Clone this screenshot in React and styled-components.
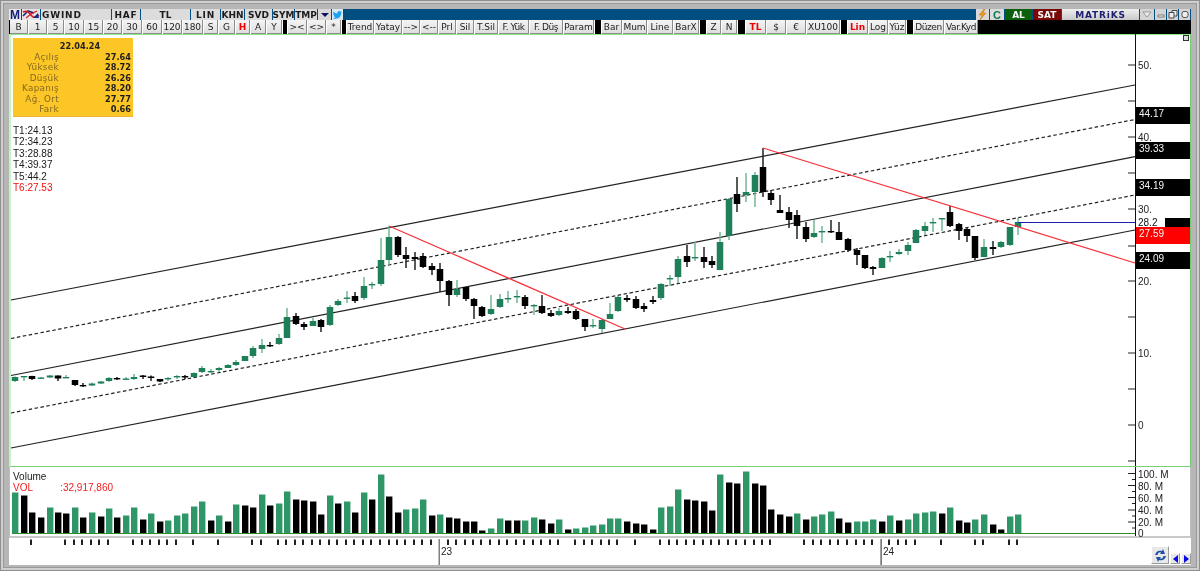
import React from 'react'
import styled, { createGlobalStyle } from 'styled-components'

const GlobalStyle = createGlobalStyle`
  html, body { margin: 0; padding: 0; background: #b5b5b5; }
  #root { width: 1200px; height: 571px; overflow: hidden; }
`;

const GREEN = '#2f9667';
const UI_FONT = '"DejaVu Sans", Verdana, sans-serif';
const CHART_FONT = '"Liberation Sans", Arial, sans-serif';

const Frame = styled.div`
  box-sizing: border-box;
  display: flex;
  flex-direction: column;
  width: 1200px;
  height: 571px;
  padding: 9px 9px 6px 9px;
  background: #b6b6b6;
  box-shadow: inset 0 0 0 1px #8e8e8e, inset 0 0 0 3px #cfcfcf, inset 0 0 0 4px #9a9a9a;
  filter: blur(0.3px);
`;

const TitleBar = styled.div`
  display: flex;
  height: 11px;
  background: #004f80;
  font: bold 9px ${UI_FONT};
  color: #1c1c1c;
`;

const TitleCell = styled.div`
  box-sizing: border-box;
  display: flex;
  align-items: center;
  justify-content: ${p => (p.$left ? 'flex-start' : 'center')};
  width: ${p => p.$w}px;
  margin-right: 1px;
  padding-left: ${p => (p.$left ? '1px' : 0)};
  background: ${p => p.$bg || '#dcdcdc'};
  color: ${p => p.$color || 'inherit'};
  letter-spacing: ${p => (p.$wide ? '0.8px' : '0')};
  white-space: nowrap;
  overflow: hidden;
`;

const BrandCell = styled(TitleCell)`
  font: bold 12px ${CHART_FONT};
`;

const ReloadCell = styled(TitleCell)`
  font: 900 11px ${CHART_FONT};
`;

const Spacer = styled.div`
  flex: 1;
`;

const ToolRow = styled.div`
  display: flex;
  height: 14px;
  padding-left: 1px;
  background: #000;
  font: 9px ${UI_FONT};
  color: #222;
`;

const LeftWhite = styled.div`
  display: flex;
  height: 14px;
  background: #fff;
  gap: 1px;
`;

const ToolButton = styled.div`
  box-sizing: border-box;
  display: flex;
  align-items: center;
  justify-content: center;
  width: ${p => p.$w}px;
  background: linear-gradient(#f4f4f4, #dedede);
  border-right: 1px solid #8c8c8c;
  border-bottom: 1px solid #8c8c8c;
  color: ${p => (p.$red ? '#f00000' : '#222')};
  font-weight: ${p => (p.$red ? 700 : 400)};
  letter-spacing: ${p => (p.$w < 34 && p.$tight ? '-0.45px' : '0')};
  white-space: nowrap;
  overflow: hidden;
`;

const ToolGap = styled.div`
  width: ${p => p.$w}px;
  background: #000;
`;

const PricePanel = styled.div`
  position: relative;
  box-sizing: border-box;
  height: 433px;
  background: #fff;
  border-top: 1px solid #8fe98f;
  border-bottom: 1px solid #74d374;
  border-left: 2px solid #c4f5c4;
  border-right: 1px solid #74c874;
`;

const ChartSvg = styled.svg`
  position: absolute;
  left: ${p => p.$inset || 0}px;
  top: ${p => (p.$inset ? -1 : 0)}px;
  display: block;
`;

const InfoBox = styled.div`
  position: absolute;
  left: 2px;
  top: 3px;
  box-sizing: border-box;
  width: 120px;
  height: 78px;
  padding: 3px 2px 0 2px;
  background: #fcc626;
  font: 8.8px/10.55px ${UI_FONT};
  box-shadow: 0 1px 0 #f2b33d;
`;

const InfoDate = styled.div`
  padding-left: 14px;
  text-align: center;
  font-weight: 700;
  font-size: 8.2px;
  color: #222;
`;

const InfoRow = styled.div`
  display: flex;
  justify-content: space-between;
`;

const InfoLabel = styled.span`
  width: 44px;
  text-align: right;
  color: #86691f;
  letter-spacing: 0.35px;
`;

const InfoValue = styled.span`
  font-weight: 700;
  font-size: 8.2px;
  color: #1c1c1c;
`;

const LevelList = styled.div`
  position: absolute;
  left: 2px;
  top: 90px;
  font: 10px/11.4px ${CHART_FONT};
  color: #1a1a1a;
`;

const Level = styled.div`
  color: ${p => (p.$red ? '#f01010' : 'inherit')};
`;

const AxisLabel = styled.span`
  position: absolute;
  left: ${p => p.$x}px;
  top: ${p => p.$y}px;
  font: 10px/12px ${CHART_FONT};
  color: #222;
  white-space: nowrap;
`;

const Flag = styled.div`
  position: absolute;
  left: 1125px;
  top: ${p => p.$y}px;
  box-sizing: border-box;
  width: 54px;
  height: 17px;
  padding-left: 3px;
  background: ${p => p.$bg || '#000'};
  font: 10px/13px ${CHART_FONT};
  color: #f4f4f4;
`;

const SplitFlag = styled.div`
  position: absolute;
  left: 1125px;
  top: ${p => p.$y}px;
  display: flex;
  width: 54px;
  height: 9px;
  background: #fff;
  font: 10px/10px ${CHART_FONT};
  color: #111;
`;

const SplitText = styled.span`
  width: 29px;
  padding-left: 2px;
  box-sizing: border-box;
`;

const SplitBlack = styled.span`
  flex: 1;
  background: #000;
`;

const Corner = styled.div`
  position: absolute;
  right: 1px;
  top: 0;
  box-sizing: border-box;
  width: 6px;
  height: 6px;
  background: #ddd;
  border: 1px solid #333;
`;

const VolumePanel = styled.div`
  position: relative;
  box-sizing: border-box;
  height: 71px;
  background: #fff;
  border-left: 1px solid #bdbdbd;
  border-right: 1px solid #bdbdbd;
  border-bottom: 2px solid #c9c9c9;
`;

const VolumeTitle = styled.div`
  position: absolute;
  left: 3px;
  top: 4px;
  font: 10px/11px ${CHART_FONT};
  color: #222;
`;

const VolumeValue = styled.div`
  display: flex;
  width: 100px;
  justify-content: space-between;
  color: #f02020;
`;

const TimeStrip = styled.div`
  position: relative;
  flex: 1;
  background: #fff;
`;

const Pager = styled.div`
  position: absolute;
  right: 0;
  bottom: 1px;
  display: flex;
  align-items: flex-end;
  gap: 1px;
`;

const PagerButton = styled.div`
  box-sizing: border-box;
  display: flex;
  align-items: center;
  justify-content: center;
  width: ${p => p.$w}px;
  height: ${p => p.$h}px;
  background: #e8e8e8;
  border-top: 1px solid #fff;
  border-left: 1px solid #fff;
  border-right: 1px solid #9a9a9a;
  border-bottom: 1px solid #9a9a9a;
`;

const topLeft = [
  { w: 70, t: 'GWIND', left: true, wide: true },
  { w: 28, t: 'HAF', wide: true },
  { w: 49, t: 'TL' },
  { w: 29, t: 'LIN', wide: true },
  { w: 23, t: 'KHN' },
  { w: 27, t: 'SVD' },
  { w: 21, t: 'SYM' },
  { w: 22, t: 'TMP' },
];

const buttons = [
  [18, 'B'], [18, '1'], [16, '5'], [19, '10'], [18, '15'], [18, '20'], [19, '30'], [19, '60'],
  [19, '120'], [20, '180'], [14, 'S'], [16, 'G'], [14, 'H', 'red'], [15, 'A'], [15, 'Y'], ['g', 4],
  [19, '><'], [18, '<>'], [14, '*'], ['g', 4], [27, 'Trend'], [27, 'Yatay'], [17, '-->'], [17, '<--'],
  [17, 'Prl'], [17, 'Sil'], [23, 'T.Sil'], [30, 'F. Yük', 'tight'], [33, 'F. Düş', 'tight'], [30, 'Param'], ['g', 6],
  [20, 'Bar'], [24, 'Mum'], [25, 'Line'], [25, 'BarX'], ['g', 6], [14, 'Z'], [15, 'N'], ['g', 7],
  [20, 'TL', 'red'], [19, '$'], [19, '€'], [33, 'XU100'], ['g', 6], [20, 'Lin', 'red'], [19, 'Log'],
  [17, 'Yüz'], ['g', 6], [30, 'Düzen', 'tight'], [33, 'Var.Kyd', 'tight'],
];

const info = [
  ['Açılış', '27.64'], ['Yüksek', '28.72'], ['Düşük', '26.26'],
  ['Kapanış', '28.20'], ['Ağ. Ort', '27.77'], ['Fark', '0.66'],
];

const levels = ['T1:24.13', 'T2:34.23', 'T3:28.88', 'T4:39.37', 'T5:44.2'];

// x, colour, high, body top, body bottom, low (page pixels)
const candles = [
  [15,'g',376.5,377,381,382],[24,'g',376,376,377,381],[32,'k',375.7,376,379,380],[41,'g',377,377.5,378.5,379],
  [50,'g',375,375.5,377.5,378],[58,'k',375.5,375.5,378.5,381],[66,'g',375,377,378,378],[75,'k',380,380,385,386],
  [83,'k',383,385,386,387],[92,'g',382.5,383.5,385.5,386],[101,'g',381,381.5,383.5,384],[109,'g',377,378,381,382],
  [117,'k',377,378,379,380],[126,'g',377,378.5,379.5,380],[134,'g',374,377,379,380],[143,'k',375,375.5,377,379],
  [151,'k',375.5,376.5,378,381],[160,'k',379,379,381.5,382],[168,'g',377,378,379,381],[177,'g',375,376,377,379],
  [185,'k',375,376,377.5,379],[194,'g',372.5,373,377,377],[202,'g',366,368,372,373],[211,'g',369,371,372,373],
  [219,'g',367,368,370,372],[228,'g',364,365,368,368],[236,'g',360,362,365,366],[245,'g',356,356,361,361],
  [253,'g',346,348,356,358],[262,'g',339,345,349,353],[270,'k',342,345,346,347],[279,'g',334,338,344,345],
  [287,'g',308,317,338,338],[296,'k',313,316,324,325],[304,'k',322,324,327,330],[313,'g',318,321,326,326],
  [321,'k',319,320,327,332],[330,'g',305,307,325,326],[338,'g',299,301,305,306],[347,'g',291,297.5,298.5,303],
  [355,'k',292,296,301,303],[364,'g',277,286,298,300],[372,'g',282,284,285,289],[381,'g',238,260,284,286],
  [389,'g',226,237,260,265],[398,'k',236,237,255,257],[406,'k',247,255,259,268],[415,'k',252,257,259,270],
  [423,'k',253,256,267,268],[432,'k',263,266,270,275],[440,'k',263,269,281,292],[449,'k',280,281,295,306],
  [457,'g',280,289,295,297],[466,'k',287,287,299,301],[474,'k',298,299,306,319],[482,'k',306,307,316,317],
  [491,'g',295,309,314,315],[500,'g',294,299,307,308],[508,'g',291,298,299,303],[517,'g',290,296,297,303],
  [525,'k',295,297,306,309],[534,'g',304,305,306,315],[542,'k',295,306,313,314],[551,'k',310,313,316,317],
  [559,'g',308,311,315,316],[568,'k',307,311,313,314],[576,'k',309,311,319,320],[585,'k',319,319,327,331],
  [593,'g',319,325,326,328],[602,'g',319,320,329,333],[610,'g',303,314,319,319],[618,'g',296,297,311,312],
  [627,'k',295,298,300,302],[636,'k',296,299,308,309],[644,'k',303,306,309,312],[653,'k',296,300,302,304],
  [661,'g',283,284,298,300],[670,'g',275,278,279,286],[678,'g',256,259,277,283],[687,'k',245,256,262,267],
  [695,'g',242,257,258,261],[704,'k',247,257,262,268],[712,'k',256,261,265,268],[720,'g',232,242,270,270],
  [729,'g',198,199,236,240],[737,'k',177,194,204,212],[746,'g',173,192,195,202],[755,'g',172,175,192,207],
  [763,'k',148,167,192,197],[771,'k',190,193,200,205],[780,'k',195,210,213,213],[789,'k',207,212,220,228],
  [797,'k',210,215,226,239],[806,'k',222,227,239,242],[814,'g',220,233,237,238],[822,'g',226,231,232,243],
  [831,'k',220,231,232,233],[839,'k',222,232,240,240],[848,'k',238,239,250,252],[857,'k',248,250,255,265],
  [865,'k',255,255,268,269],[873,'k',266,267,269,275],[882,'g',257,258,268,268],[890,'g',251,256,257,262],
  [899,'g',249,252,254,255],[908,'g',242,245,251,255],[916,'g',229,230,243,243],[925,'g',222,226,231,235],
  [933,'g',218,222,223,232],[942,'g',218,218,219,231],[950,'k',206,212,226,227],[959,'k',223,224,231,240],
  [967,'k',228,229,236,242],[975,'k',236,236,258,260],[984,'g',239,247,257,257],[993,'k',241,247,249,255],
  [1001,'g',241,242,247,248],[1010,'g',227,227,245,246],[1018,'g',218,222,227,235],
];

const volumes = [
  [15,41,'g'],[24,38,'k'],[32,21,'k'],[41,16,'k'],[50,26,'g'],[58,21,'k'],[66,20,'k'],[75,26,'g'],[83,16,'k'],[92,21,'g'],
  [101,17,'k'],[109,25,'g'],[117,16,'k'],[126,18,'g'],[134,26,'g'],[143,14,'k'],[151,20,'g'],[160,12,'k'],[168,13,'g'],[177,18,'g'],
  [185,20,'g'],[194,27,'g'],[202,32,'g'],[211,13,'k'],[219,18,'g'],[228,12,'k'],[236,29,'g'],[245,28,'k'],[253,26,'k'],[262,39,'g'],
  [270,28,'k'],[279,30,'g'],[287,42,'g'],[296,34,'k'],[304,33,'k'],[313,32,'k'],[321,19,'k'],[330,38,'g'],[338,30,'k'],[347,32,'g'],
  [355,21,'k'],[364,41,'g'],[372,34,'k'],[381,59,'g'],[389,37,'k'],[398,21,'k'],[406,24,'g'],[415,25,'g'],[423,34,'g'],[432,18,'k'],
  [440,19,'g'],[449,16,'k'],[457,15,'k'],[466,12,'k'],[474,12,'k'],[482,3,'k'],[491,5,'g'],[500,15,'g'],[508,13,'k'],[517,13,'k'],
  [525,13,'g'],[534,16,'g'],[542,14,'k'],[551,10,'k'],[559,14,'g'],[568,4,'k'],[576,5,'g'],[585,6,'g'],[593,8,'g'],[602,9,'g'],
  [610,15,'g'],[618,15,'g'],[627,12,'k'],[636,10,'k'],[644,9,'k'],[653,4,'k'],[661,26,'g'],[670,27,'g'],[678,44,'g'],[687,34,'k'],
  [695,33,'k'],[704,32,'k'],[712,23,'k'],[720,59,'g'],[729,51,'k'],[737,50,'k'],[746,62,'g'],[755,50,'k'],[763,48,'k'],[771,24,'k'],
  [780,19,'k'],[789,17,'k'],[797,20,'g'],[806,14,'k'],[814,17,'g'],[822,19,'g'],[831,22,'g'],[839,15,'k'],[848,11,'k'],[857,12,'g'],
  [865,12,'g'],[873,14,'g'],[882,12,'k'],[890,18,'g'],[899,13,'k'],[908,14,'g'],[916,20,'g'],[925,21,'g'],[933,22,'g'],[942,20,'k'],
  [950,26,'g'],[959,13,'k'],[967,11,'k'],[975,14,'g'],[984,19,'g'],[993,9,'k'],[1001,4,'k'],[1010,17,'g'],[1018,19,'g'],
];

const timeTicks = [
  32,66,75,83,92,100,109,134,143,151,160,168,177,194,219,253,262,279,287,296,304,313,321,330,338,347,355,364,372,381,390,398,
  406,415,423,432,449,457,466,474,482,491,500,508,517,525,534,542,551,559,576,585,593,602,610,618,636,661,670,678,687,695,704,712,720,729,737,746,755,763,771,
  805,814,822,831,839,848,857,865,873,890,899,907,916,942,976,984,1010,1018,
];

const channels = [
  { y1: 300, y2: 85, dash: false },
  { y1: 338.5, y2: 119.5, dash: true },
  { y1: 375.5, y2: 156.7, dash: false },
  { y1: 413, y2: 195, dash: true },
  { y1: 448, y2: 230, dash: false },
];

const priceTicks = [65, 101, 137, 173, 209, 246, 281, 317, 353, 389, 425, 461];
const priceLabels = [['50.', 65], ['40.', 137], ['30.', 209], ['20.', 281], ['10.', 353], ['0', 425]];
const volLabels = [['100. M', 474], ['80. M', 486], ['60. M', 498], ['40. M', 510], ['20. M', 522], ['0', 533]];

function Candle({ x, color, high, top, bottom, low }) {
  const dark = color === 'k';
  return (
    <g>
      <line x1={x} x2={x} y1={high} y2={low} stroke={dark ? '#222' : '#6fb893'} strokeWidth="1.5" />
      <rect
        x={x - 3.25}
        y={top}
        width="6.5"
        height={Math.max(bottom - top, 1.4)}
        fill={dark ? '#000' : '#1f7f58'}
      />
    </g>
  );
}

function PriceChart() {
  return (
    <ChartSvg $inset={-2} width="1180" height="432" viewBox="9 34 1180 432">
      {channels.map((c, i) => (
        <line
          key={i}
          x1="11"
          x2="1135"
          y1={c.y1}
          y2={c.y2}
          stroke="#222"
          strokeWidth="1.2"
          strokeDasharray={c.dash ? '3.5 2.5' : undefined}
        />
      ))}
      {candles.map(([x, color, high, top, bottom, low]) => (
        <Candle key={x} x={x} color={color} high={high} top={top} bottom={bottom} low={low} />
      ))}
      <line x1="389" y1="226" x2="625" y2="329" stroke="#f8303a" strokeWidth="1.2" />
      <line x1="763" y1="148" x2="1135" y2="263" stroke="#f8303a" strokeWidth="1.2" />
      <line x1="1018" y1="222.5" x2="1135" y2="222.5" stroke="#2020b0" strokeWidth="1.2" />
      <line x1="1135.5" y1="34" x2="1135.5" y2="466" stroke="#111" strokeWidth="1" />
      {priceTicks.map(y => (
        <line key={y} x1="1128" x2="1135" y1={y} y2={y} stroke="#222" strokeWidth="1" />
      ))}
    </ChartSvg>
  );
}

function VolumeChart() {
  const base = 533.5;
  const major = [473.5, 485.5, 497.5, 510, 522];
  const minor = [479.5, 491.5, 503.5, 516, 528];
  return (
    <ChartSvg width="1180" height="69" viewBox="10 467 1180 69">
      {volumes.map(([x, h, color]) => (
        <rect
          key={x}
          x={x - 3}
          y={base - h}
          width="6.4"
          height={h}
          fill={color === 'k' ? '#000' : GREEN}
        />
      ))}
      <line x1="12" x2="1135" y1={base} y2={base} stroke="#2f8f2f" strokeWidth="1" />
      <line x1="1135.5" y1="467" x2="1135.5" y2="536" stroke="#111" strokeWidth="1" />
      {major.map(y => (
        <line key={y} x1="1128" x2="1135" y1={y} y2={y} stroke="#222" strokeWidth="1" />
      ))}
      {minor.map(y => (
        <line key={y} x1="1132" x2="1135" y1={y} y2={y} stroke="#222" strokeWidth="1" />
      ))}
    </ChartSvg>
  );
}

function TimeAxis() {
  return (
    <ChartSvg width="1180" height="27" viewBox="10 538 1180 27">
      {timeTicks.map(x => (
        <rect key={x} x={x - 1} y="539.5" width="2" height="5.5" fill="#222" />
      ))}
      <rect x="439.5" y="539" width="1.5" height="26" fill="#808080" />
      <rect x="881.5" y="539" width="1.2" height="26" fill="#444" />
    </ChartSvg>
  );
}

function Logo() {
  return (
    <svg width="18" height="11" viewBox="0 0 18 11">
      <path d="M1 7 L6 2 L12 4" fill="none" stroke="#1c2a78" strokeWidth="1.6" />
      <path d="M1 3 C5 1 7 3 9 6 C11 9 14 9 17 6" fill="none" stroke="#d81f26" strokeWidth="1.6" />
      <path d="M4 9 L9 5 L15 2" fill="none" stroke="#d81f26" strokeWidth="1.2" />
      <path d="M11 9 L16 4 L17 9 Z" fill="#1c2a78" />
    </svg>
  );
}

function Twitter() {
  return (
    <svg width="11" height="10" viewBox="0 0 24 24">
      <path
        fill="#1da1f2"
        d="M23 4.9c-.8.4-1.7.6-2.6.8.9-.6 1.6-1.4 2-2.5-.9.5-1.9.9-2.9 1.1a4.6 4.6 0 0 0-7.9 4.2A13 13 0 0 1 2.2 3.7a4.6 4.6 0 0 0 1.4 6.1c-.7 0-1.4-.2-2.1-.6 0 2.2 1.6 4.100 3.7 4.600-.7.200-1.400.200-2.100.100.600 1.800 2.300 3.100 4.300 3.200A9.300 9.300 0 0 1 .6 19 13 13 0 0 0 20.600 7.500c.9-.6 1.700-1.500 2.400-2.600z"
      />
    </svg>
  );
}

function Bolt() {
  return (
    <svg width="9" height="11" viewBox="0 0 9 11">
      <path d="M6 0 L1 6 L4 6 L2 11 L8 4 L5 4 L7 0 Z" fill="#ef9a1a" stroke="#a8640a" strokeWidth=".4" />
    </svg>
  );
}

function Refresh() {
  return (
    <svg width="13" height="13" viewBox="0 0 13 13">
      <path d="M1 6 C2 2 5 1 8 2 L9 0 L11 5 L6 5 L7 3.5 C5 3 4 4 3.5 6 Z" fill="#1f4fa8" />
      <path d="M12 7 C11 11 8 12 5 11 L4 13 L2 8 L7 8 L6 9.5 C8 10 9 9 9.5 7 Z" fill="#1f4fa8" />
    </svg>
  );
}

function Triangle({ dir }) {
  const d = { down: 'M0 0 L8 0 L4 4 Z', left: 'M5 0 L5 8 L0 4 Z', right: 'M0 0 L0 8 L5 4 Z' }[dir];
  const size = dir === 'down' ? [8, 4] : [5, 8];
  return (
    <svg width={size[0]} height={size[1]} viewBox={`0 0 ${size[0]} ${size[1]}`}>
      <path d={d} fill={dir === 'down' ? '#101060' : '#0808e0'} />
    </svg>
  );
}

function WinButton({ kind }) {
  return (
    <TitleCell $w={kind === 'drop' ? 14 : 11} $bg="#d4d4d4">
      <svg width="10" height="9" viewBox="0 0 10 9">
        {kind === 'drop' && <path d="M1 2 L9 2 L5 7 Z" fill="#eee" stroke="#888" strokeWidth=".8" />}
        {kind === 'min' && <rect x="2" y="5" width="6" height="2" fill="#eee" stroke="#555" strokeWidth=".7" />}
        {kind === 'max' && <path d="M1 2.5 H6 V8 H1 Z M4 2 V.5 H9 V6 H6.5" fill="#eee" stroke="#333" strokeWidth=".9" />}
        {kind === 'close' && <rect x="2" y="1.5" width="6" height="6" rx="2" fill="#eee" stroke="#444" strokeWidth=".9" />}
      </svg>
    </TitleCell>
  );
}

export default function App() {
  return (
    <>
      <GlobalStyle />
      <Frame>
        <TitleBar>
          <BrandCell $w={12} $bg="#e8e8e8" $color="#101c78">M</BrandCell>
          <TitleCell $w={18} $bg="#e4e4e4"><Logo /></TitleCell>
          {topLeft.map(c => (
            <TitleCell key={c.t} $w={c.w} $left={c.left} $wide={c.wide}>{c.t}</TitleCell>
          ))}
          <TitleCell $w={13} $bg="#d8d8d8"><Triangle dir="down" /></TitleCell>
          <TitleCell $w={11} $bg="#dce8f0"><Twitter /></TitleCell>
          <Spacer />
          <TitleCell $w={13} $bg="#d8d8d8"><Bolt /></TitleCell>
          <ReloadCell $w={14} $bg="#dcdcdc" $color="#0c7a50">C</ReloadCell>
          <TitleCell $w={27} $bg="#0b610b" $color="#f4f4f4">AL</TitleCell>
          <TitleCell $w={28} $bg="#7a0606" $color="#f4f4f4">SAT</TitleCell>
          <TitleCell $w={77} $bg="linear-gradient(#efefef, #c9c9c9)" $color="#1d1d70" $wide>MATRiKS</TitleCell>
          <WinButton kind="drop" />
          <WinButton kind="min" />
          <WinButton kind="max" />
          <WinButton kind="close" />
        </TitleBar>
        <ToolRow>
          <LeftWhite>
            {buttons.map(([w, t, mod], i) =>
              w === 'g' ? (
                <ToolGap key={i} $w={t} />
              ) : (
                <ToolButton key={i} $w={w} $red={mod === 'red'} $tight={mod === 'tight'}>{t}</ToolButton>
              )
            )}
          </LeftWhite>
        </ToolRow>
        <PricePanel>
          <PriceChart />
          <InfoBox>
            <InfoDate>22.04.24</InfoDate>
            {info.map(([label, value]) => (
              <InfoRow key={label}>
                <InfoLabel>{label}</InfoLabel>
                <InfoValue>{value}</InfoValue>
              </InfoRow>
            ))}
          </InfoBox>
          <LevelList>
            {levels.map(l => <Level key={l}>{l}</Level>)}
            <Level $red>T6:27.53</Level>
          </LevelList>
          {priceLabels.map(([t, y]) => (
            <AxisLabel key={t} $x={1127} $y={y - 40}>{t}</AxisLabel>
          ))}
          <Flag $y={72}>44.17</Flag>
          <Flag $y={107}>39.33</Flag>
          <Flag $y={144}>34.19</Flag>
          <SplitFlag $y={183}>
            <SplitText>28.2</SplitText>
            <SplitBlack />
          </SplitFlag>
          <Flag $y={192} $bg="#ff0000">27.59</Flag>
          <Flag $y={217}>24.09</Flag>
          <Corner />
        </PricePanel>
        <VolumePanel>
          <VolumeChart />
          <VolumeTitle>
            Volume
            <VolumeValue><span>VOL</span><span>:32,917,860</span></VolumeValue>
          </VolumeTitle>
          {volLabels.map(([t, y]) => (
            <AxisLabel key={t} $x={1128} $y={y - 472}>{t}</AxisLabel>
          ))}
        </VolumePanel>
        <TimeStrip>
          <TimeAxis />
          <AxisLabel $x={432} $y={8}>23</AxisLabel>
          <AxisLabel $x={874} $y={8}>24</AxisLabel>
          <Pager>
            <PagerButton $w={18} $h={18}><Refresh /></PagerButton>
            <PagerButton $w={10} $h={11}><Triangle dir="left" /></PagerButton>
            <PagerButton $w={10} $h={11}><Triangle dir="right" /></PagerButton>
          </Pager>
        </TimeStrip>
      </Frame>
    </>
  );
}
